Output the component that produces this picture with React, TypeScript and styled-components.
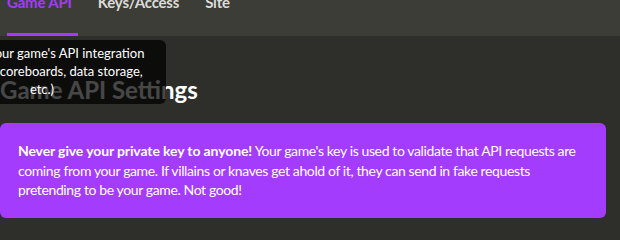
import React from 'react';
import styled, {createGlobalStyle} from 'styled-components';

const GlobalStyle = createGlobalStyle`
  body {
    margin: 0;
    background-color: #2e2f2a;
    font-family: Lato, "Open Sans", sans-serif;
    color: #ffffff;
  }
`;

const tabs = ['Game API', 'Keys/Access', 'Site'];

function App() {
  return (
    <Page>
      <GlobalStyle />
      <TabBar>
        {tabs.map((tab, key) => (
          <Tab key={key} active={key === 0}>{tab}</Tab>
        ))}
      </TabBar>
      <Content>
        <Heading>Game API Settings</Heading>
        <Tooltip>
          Manage your game's API integration<br />
          features (scoreboards, data storage,<br />
          etc.)
        </Tooltip>
        <Warning>
          <strong>Never give your private key to anyone!</strong> Your game's key is used to validate
          that API requests are coming from your game. If villains or knaves get ahold of it, they
          can send in fake requests pretending to be your game. Not good!
        </Warning>
      </Content>
    </Page>
  );
}

const Page = styled.div`
  display: flex;
  flex-direction: column;
  width: 620px;
  height: 221px;
  overflow: hidden;
`;

const TabBar = styled.div`
  display: flex;
  align-items: flex-end;
  gap: 20px;
  height: 36px;
  padding-left: 7px;
  background-color: #3c3d37;
  overflow: hidden;
`;

const Tab = styled.div<{active?: boolean}>`
  display: flex;
  height: 44px;
  box-sizing: border-box;
  padding-right: 6px;
  font-size: 15px;
  font-weight: 700;
  letter-spacing: -0.2px;
  line-height: 20px;
  color: ${p => (p.active ? '#a33bfc' : '#dcdcd8')};
  border-bottom: 3px solid ${p => (p.active ? '#a33bfc' : 'transparent')};
`;

const Content = styled.div`
  position: relative;
  display: flex;
  flex-direction: column;
  padding-right: 14px;
`;

const Heading = styled.h1`
  margin: 39px 0 18px;
  font-size: 24px;
  line-height: 30px;
  font-weight: 700;
  color: #ffffff;
`;

const Tooltip = styled.div`
  position: absolute;
  left: -82px;
  top: 4px;
  width: 248px;
  box-sizing: border-box;
  padding: 4px 19px 6px;
  border-radius: 6px;
  background-color: rgba(0, 0, 0, 0.72);
  font-size: 13px;
  line-height: 18px;
  text-align: center;
  color: #ffffff;
`;

const Warning = styled.div`
  padding: 18px 16px 18px 18px;
  border-radius: 6px;
  background-color: #a43cfd;
  font-size: 14px;
  line-height: 1.4;
  letter-spacing: -0.38px;
  color: #ffffff;

  strong {
    font-weight: 700;
    letter-spacing: -0.12px;
  }
`;

export default App;
